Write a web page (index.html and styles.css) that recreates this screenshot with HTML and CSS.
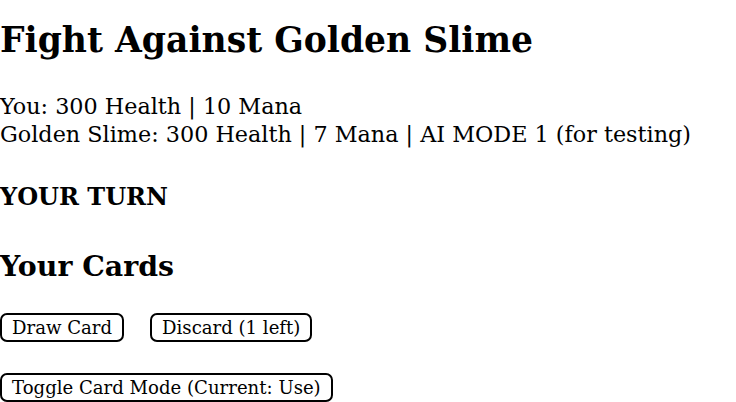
FILE: index.html
```html
<!DOCTYPE html>
<html>
<head>
<meta charset="utf-8">
<link rel="stylesheet" href="styles.css">
</head>
<body>
<h1 class="title">Fight Against Golden Slime</h1>
<div class="stats">
  <div class="stat-line">You: 300 Health | 10 Mana</div>
  <div class="stat-line">Golden Slime: 300 Health | 7 Mana | AI MODE 1 (for testing)</div>
</div>
<div class="turn">YOUR TURN</div>
<h2 class="cards-title">Your Cards</h2>
<div class="actions">
  <button class="btn">Draw Card</button>
  <button class="btn">Discard (1 left)</button>
</div>
<div class="actions second">
  <button class="btn">Toggle Card Mode (Current: Use)</button>
</div>
</body>
</html>
```
FILE: styles.css
```css
html, body {
  margin: 0;
  padding: 0;
  background: #fff;
  color: #000;
}
body {
  font-family: "DejaVu Serif", "Liberation Serif", serif;
  font-size: 24px;
  overflow: hidden;
  height: 402px;
}
.title {
  margin: 20px 0 0 0;
  font-size: 34.6px;
  line-height: 40px;
  font-weight: bold;
}
.stats {
  margin-top: 32px;
}
.stat-line {
  font-size: 22.3px;
  line-height: 28px;
}
.turn {
  margin-top: 35px;
  font-size: 24px;
  line-height: 28px;
  font-weight: bold;
}
.cards-title {
  margin: 37px 0 0 0;
  font-size: 28.4px;
  line-height: 36px;
  font-weight: bold;
}
.actions {
  display: flex;
  gap: 26px;
  margin-top: 29px;
}
.actions.second {
  margin-top: 31px;
}
.btn {
  font-family: inherit;
  font-size: 18.1px;
  line-height: 23px;
  height: 29px;
  padding: 0 10px;
  background: #fff;
  color: #000;
  border: 2px solid #000;
  border-radius: 7px;
}
```
